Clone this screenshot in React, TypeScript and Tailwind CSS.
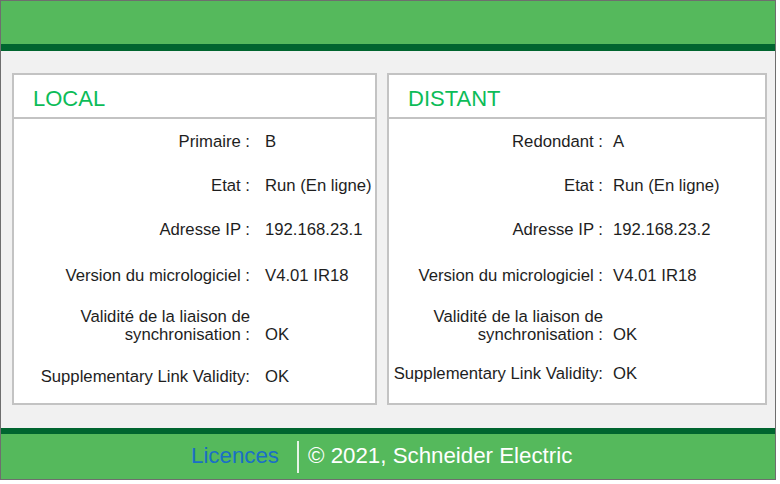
import React from 'react';

type Row = { label: React.ReactNode; value: string; gap: string; twoLine?: boolean };

const FONT = { fontFamily: '"Liberation Sans", Arial, sans-serif' };

const LOCAL_ROWS: Row[] = [
  { label: 'Primaire :', value: 'B', gap: 'mt-[14px]' },
  { label: 'Etat :', value: 'Run (En ligne)', gap: 'mt-[26px]' },
  { label: 'Adresse IP :', value: '192.168.23.1', gap: 'mt-[26px]' },
  { label: 'Version du micrologiciel :', value: 'V4.01 IR18', gap: 'mt-[28px]' },
  {
    label: (
      <>
        Validité de la liaison de
        <br />
        synchronisation :
      </>
    ),
    value: 'OK',
    gap: 'mt-[23px]',
    twoLine: true,
  },
  { label: 'Supplementary Link Validity:', value: 'OK', gap: 'mt-[24px]' },
];

const DISTANT_ROWS: Row[] = [
  { label: 'Redondant :', value: 'A', gap: 'mt-[14px]' },
  { label: 'Etat :', value: 'Run (En ligne)', gap: 'mt-[26px]' },
  { label: 'Adresse IP :', value: '192.168.23.2', gap: 'mt-[26px]' },
  { label: 'Version du micrologiciel :', value: 'V4.01 IR18', gap: 'mt-[28px]' },
  {
    label: (
      <>
        Validité de la liaison de
        <br />
        synchronisation :
      </>
    ),
    value: 'OK',
    gap: 'mt-[23px]',
    twoLine: true,
  },
  { label: 'Supplementary Link Validity:', value: 'OK', gap: 'mt-[21px]' },
];

function StatusCard({
  title,
  rows,
  width,
  labelWidth,
  valueGap,
}: {
  title: string;
  rows: Row[];
  width: string;
  labelWidth: string;
  valueGap: string;
}) {
  return (
    <div className={`${width} flex flex-col border-2 border-[#c3c3c3] bg-white`}>
      {/* en-tête */}
      <div className="flex h-[44px] items-center border-b-2 border-[#c3c3c3] pl-[19px] pt-[6px]">
        <span className="text-[22px] leading-none text-[#0cbc58]">{title}</span>
      </div>
      {/* lignes */}
      <div className="flex flex-col text-[16.7px] leading-[18px] text-[#1e1e1e]">
        {rows.map((row, i) => (
          <div key={i} className={`${row.gap} flex ${row.twoLine ? 'items-end' : 'items-center'}`}>
            <div className={`${labelWidth} shrink-0 text-right`}>{row.label}</div>
            <div className={`${valueGap} whitespace-nowrap`}>{row.value}</div>
          </div>
        ))}
      </div>
    </div>
  );
}

export default function App() {
  return (
    <div className="h-[484px] w-[780px] bg-white" style={FONT}>
      <div className="flex h-[480px] w-[776px] flex-col border border-[#6e6e6e] bg-[#f1f1f1]">
        <div className="h-[43px] shrink-0 bg-[#55b95c]" />
        <div className="h-[7px] shrink-0 bg-[#00652f]" />

        <div className="flex flex-1 gap-[10px] pl-[11px] pt-[22px]">
          <StatusCard
            title="LOCAL"
            rows={LOCAL_ROWS}
            width="w-[365px] h-[332px]"
            labelWidth="w-[236px]"
            valueGap="ml-[15px]"
          />
          <StatusCard
            title="DISTANT"
            rows={DISTANT_ROWS}
            width="w-[380px] h-[332px]"
            labelWidth="w-[214px]"
            valueGap="ml-[10px]"
          />
        </div>

        <div className="h-[6px] shrink-0 bg-[#00652f]" />
        <div className="flex h-[45px] shrink-0 items-center bg-[#55b95c] pl-[190px] text-[22.3px] leading-none">
          <span className="pr-[18px] text-[#1a6fc6]">Licences</span>
          <span className="h-[32px] w-[2px] bg-[#e6f4e6]" />
          <span className="pl-[9px] text-white">© 2021, Schneider Electric</span>
        </div>
      </div>
    </div>
  );
}
